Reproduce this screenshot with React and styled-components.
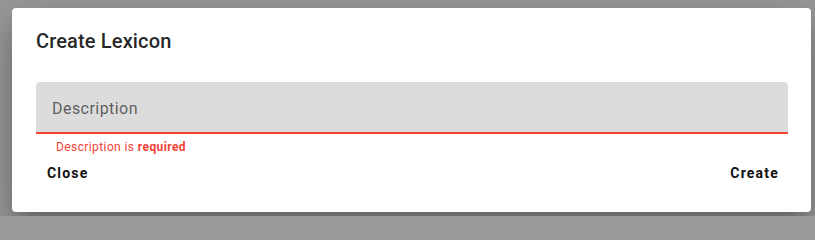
import React from 'react';
import styled, { createGlobalStyle } from 'styled-components';

const GlobalStyle = createGlobalStyle`
  html, body {
    margin: 0;
    padding: 0;
    height: 216px;
    overflow: hidden;
    background: #9a9a9a;
    font-family: Roboto, "Liberation Sans", sans-serif;
  }
  #root {
    padding: 8px 4px 4px 12px;
  }
`;

const Dialog = styled.div`
  width: 799px;
  height: 204px;
  box-sizing: border-box;
  background: #fff;
  border-radius: 4px;
  box-shadow: 0 11px 15px -7px rgba(0, 0, 0, 0.2), 0 24px 38px 3px rgba(0, 0, 0, 0.14),
    0 9px 46px 8px rgba(0, 0, 0, 0.12);
  display: flex;
  flex-direction: column;
`;

const Title = styled.h2`
  margin: 0;
  padding: 17px 24px 15px;
  font-size: 20px;
  font-weight: 500;
  line-height: 32px;
  letter-spacing: 0.15px;
  color: rgba(0, 0, 0, 0.87);
`;

const Content = styled.div`
  padding: 10px 23px 0 24px;
`;

const Field = styled.div`
  height: 50px;
  background: #dcdcdc;
  border-radius: 4px 4px 0 0;
  border-bottom: 2px solid #f44336;
  display: flex;
  align-items: center;
  padding-left: 16px;
`;

const Label = styled.span`
  font-size: 16px;
  color: rgba(0, 0, 0, 0.6);
  letter-spacing: 0.45px;
  margin-top: 3px;
`;

const Helper = styled.p`
  margin: 3px 0 0 20px;
  font-size: 12px;
  line-height: 20px;
  letter-spacing: 0.4px;
  color: #f44336;

  strong {
    font-weight: 700;
  }
`;

const Actions = styled.div`
  display: flex;
  justify-content: space-between;
  align-items: center;
  padding: 0 22px 0 24px;
`;

const Button = styled.button`
  border: none;
  background: none;
  padding: 0 10px 0 11px;
  height: 32px;
  font-family: inherit;
  font-size: 14px;
  font-weight: 700;
  letter-spacing: 1.2px;
  color: #111;
  cursor: pointer;
`;

export default function App() {
  return (
    <>
      <GlobalStyle />
      <Dialog>
        <Title>Create Lexicon</Title>
        <Content>
          <Field>
            <Label>Description</Label>
          </Field>
          <Helper>
            Description is <strong>required</strong>
          </Helper>
        </Content>
        <Actions>
          <Button>Close</Button>
          <Button>Create</Button>
        </Actions>
      </Dialog>
    </>
  );
}
